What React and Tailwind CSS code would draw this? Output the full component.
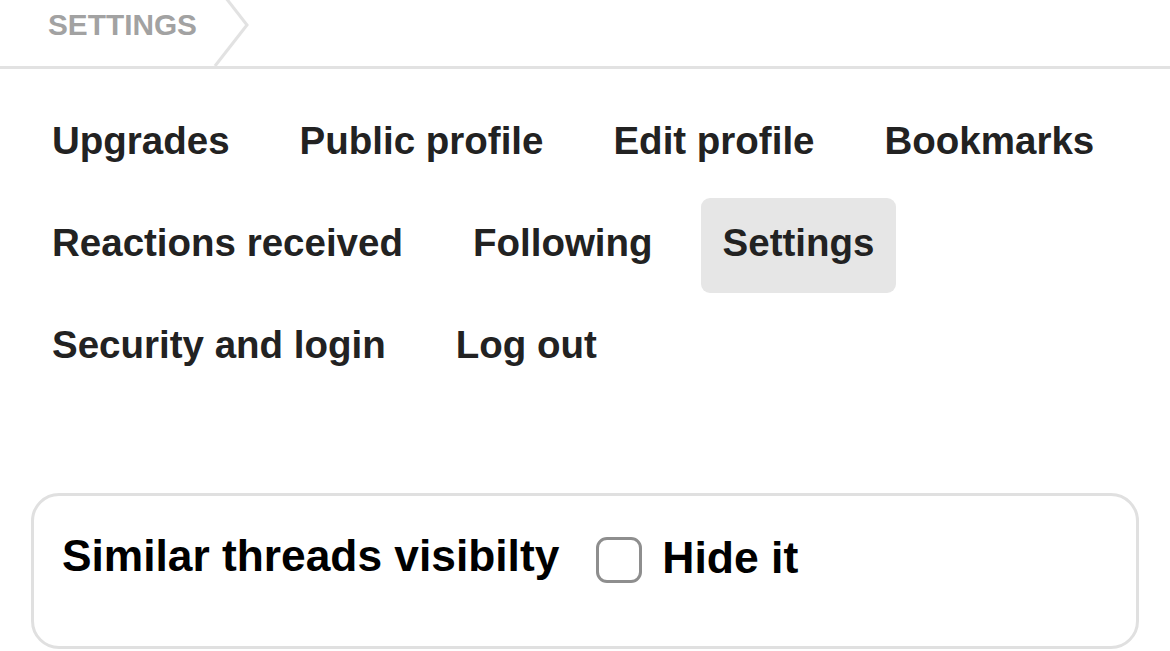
import React from 'react';

const tabs = [
  'Upgrades',
  'Public profile',
  'Edit profile',
  'Bookmarks',
  'Reactions received',
  'Following',
  'Settings',
  'Security and login',
  'Log out',
];

export default function App() {
  const [hidden, setHidden] = React.useState(false);

  return (
    <div className="w-[1170px] h-[651px] overflow-hidden bg-white font-['Liberation_Sans',Arial,sans-serif]">
      <div className="h-[69px] border-b-[3px] border-[#e2e2e2] flex items-start">
        <span className="ml-[48px] mt-[9px] text-[29.8px] leading-[32px] font-bold text-[#a2a2a2]">SETTINGS</span>
        <svg className="ml-[16px] overflow-visible" width="36" height="66" viewBox="0 0 36 66">
          <polyline points="2,-16 34,25 2,66" fill="none" stroke="#e2e2e2" strokeWidth="3" />
        </svg>
      </div>

      <nav className="flex flex-wrap gap-x-[26px] gap-y-[7px] pl-[30px] pr-[20px] pt-[27px]">
        {tabs.map((t) => (
          <a
            key={t}
            href="#"
            className={`h-[95px] px-[22px] pb-[6px] flex items-center rounded-[9px] text-[38.5px] font-bold text-[#222] ${
              t === 'Settings' ? 'bg-[#e6e6e6]' : ''
            }`}
          >
            {t}
          </a>
        ))}
      </nav>

      <div className="mx-[31px] mt-[98px] h-[156px] border-[3px] border-[#e0e0e0] rounded-[28px] pl-[28px] pt-[35px] flex items-start">
        <div className="flex items-center h-[50px]">
          <span className="text-[44.3px] font-bold text-black leading-none">Similar threads visibilty</span>
          <label className="flex items-center ml-[37px] cursor-pointer">
            <span
              onClick={() => setHidden(!hidden)}
              className={`w-[46px] h-[46px] rounded-[11px] border-[3px] border-[#8e8e8e] mt-[8px] ${hidden ? 'bg-[#8e8e8e]' : 'bg-white'}`}
            />
            <span className="ml-[20px] text-[44.5px] font-bold text-black leading-none mt-[4px]">Hide it</span>
          </label>
        </div>
      </div>
    </div>
  );
}
